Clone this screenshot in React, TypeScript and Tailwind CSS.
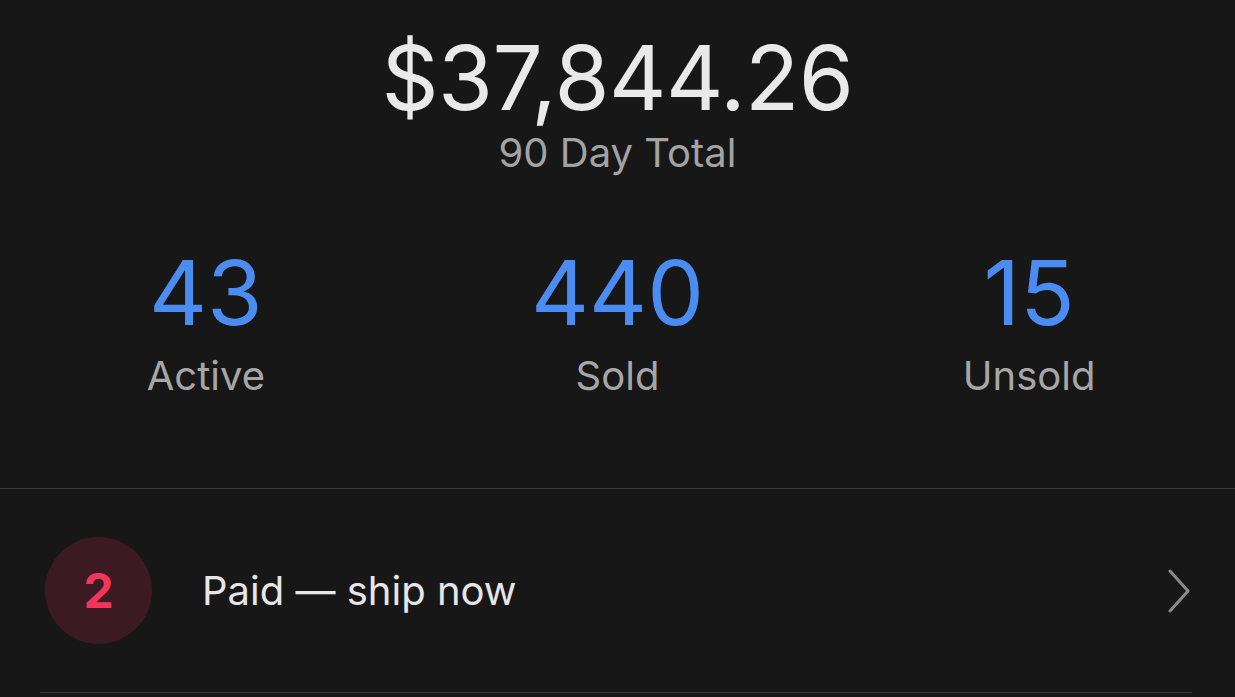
import React from 'react';

const stats = [
  { value: '43', label: 'Active' },
  { value: '440', label: 'Sold' },
  { value: '15', label: 'Unsold' },
];

export default function App() {
  return (
    <div className="w-[1235px] h-[697px] overflow-hidden bg-[#171717] font-['Inter',sans-serif] flex flex-col">
      {/* total */}
      <div className="flex flex-col items-center pt-[34px]">
        <div className="text-[89px] leading-[88px] text-[#e9e9e9] tracking-[-0.5px]">$37,844.26</div>
        <div className="text-[40px] leading-[40px] text-[#a3a3a3] mt-[11px]">90 Day Total</div>
      </div>

      {/* stats */}
      <div className="grid grid-cols-3 mt-[75px]">
        {stats.map((s) => (
          <div key={s.label} className="flex flex-col items-center">
            <div className="text-[90px] leading-[90px] text-[#4b8cf3]">{s.value}</div>
            <div className="text-[40px] leading-[40px] text-[#a6a6a6] mt-[18px]">{s.label}</div>
          </div>
        ))}
      </div>

      <div className="mt-[92px] h-px bg-[#3a3a3a]" />

      {/* action row */}
      <div className="flex items-center h-[203px] pl-[45px] pr-[44px]">
        <div className="w-[107px] h-[107px] rounded-full bg-[#3b1a21] flex items-center justify-center">
          <span className="text-[48px] font-bold text-[#f2355a] leading-none">2</span>
        </div>
        <div className="ml-[50px] text-[40px] text-[#e6e6e6] flex-1">Paid — ship now</div>
        <svg width="24" height="44" viewBox="0 0 24 44" fill="none">
          <path d="M3 2 L21 22 L3 42" stroke="#8a8a8a" strokeWidth="3" strokeLinecap="round" strokeLinejoin="round" />
        </svg>
      </div>
      <div className="ml-[40px] mr-[43px] h-px bg-[#3a3a3a]" />
    </div>
  );
}
